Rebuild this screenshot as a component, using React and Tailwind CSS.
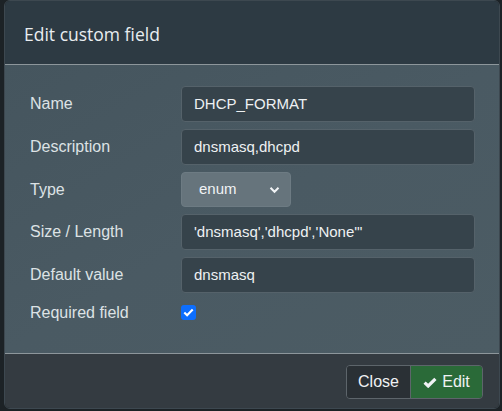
import React from 'react';

const Row = ({ label, children }) => (
  <div className="grid grid-cols-[151px_294px] items-center">
    <label className="text-[16px] text-[#dde2e5]">{label}</label>
    {children}
  </div>
);

const TextInput = ({ value }) => (
  <div className="h-[36px] w-[294px] rounded-[4px] border border-[#55626a] bg-[#36434b] px-[12px] flex items-center text-[15px] text-[#eef1f3]">
    {value}
  </div>
);

export default function App() {
  return (
    <div className="w-[502px] h-[411px] bg-[#1c2226] pl-[4px] pr-[2px] pb-[2px] font-['Liberation_Sans',Arial,sans-serif]">
      <div className="h-full flex flex-col rounded-[6px] border border-[#3d4850] overflow-hidden">
        <div className="h-[64px] shrink-0 flex items-center px-[19px] bg-[#2d3a43] border-b border-[#8d969b]">
          <h1 className="font-['Open_Sans',sans-serif] text-[17.5px] text-[#e9edf0] pt-[3px]">Edit custom field</h1>
        </div>

        <div className="h-[288px] shrink-0 bg-gradient-to-br from-[#45555e] via-[#4a5a63] to-[#4c5c64] pl-[25px] pt-[21px] flex flex-col gap-[7px]">
          <Row label="Name"><TextInput value="DHCP_FORMAT" /></Row>
          <Row label="Description"><TextInput value="dnsmasq,dhcpd" /></Row>
          <Row label="Type">
            <div className="h-[35px] w-[110px] rounded-[4px] border border-[#6d7b83] bg-[#66747c] pl-[17px] pr-[10px] flex items-center justify-between text-[15px] text-[#f1f3f5]">
              <span>enum</span>
              <svg width="11" height="8" viewBox="0 0 11 8" fill="none">
                <path d="M1.5 1.8L5.5 5.8L9.5 1.8" stroke="#f1f3f5" strokeWidth="2" />
              </svg>
            </div>
          </Row>
          <Row label="Size / Length"><TextInput value={"'dnsmasq','dhcpd','None'\""} /></Row>
          <Row label="Default value"><TextInput value="dnsmasq" /></Row>
          <div className="grid grid-cols-[151px_294px] items-center mt-[5px]">
            <label className="text-[16px] leading-[15px] text-[#dde2e5]">Required field</label>
            <div className="w-[15px] h-[15px] rounded-[3px] bg-[#0d6efd] flex items-center justify-center">
              <svg width="11" height="9" viewBox="0 0 11 9" fill="none">
                <path d="M1.3 4.6L4.1 7.3L9.7 1.5" stroke="#ffffff" strokeWidth="2.1" />
              </svg>
            </div>
          </div>
        </div>

        <div className="flex-1 bg-[#343b41] border-t border-[#8d969b] flex justify-end items-start pt-[11px] pr-[16px]">
          <div className="flex rounded-[4px] border border-[#5d656b] overflow-hidden h-[34px]">
            <button className="w-[64px] bg-[#2a3035] text-[16px] text-[#f0f2f4] border-r border-[#5d656b]">Close</button>
            <button className="w-[71px] bg-[#2a6a38] text-[16px] text-[#f0f2f4] flex items-center justify-center gap-[5px]">
              <svg width="14" height="11" viewBox="0 0 14 11" fill="none">
                <path d="M1.6 5.6L5.2 9L12.4 1.8" stroke="#f0f2f4" strokeWidth="3.2" />
              </svg>
              Edit
            </button>
          </div>
        </div>
      </div>
    </div>
  );
}
